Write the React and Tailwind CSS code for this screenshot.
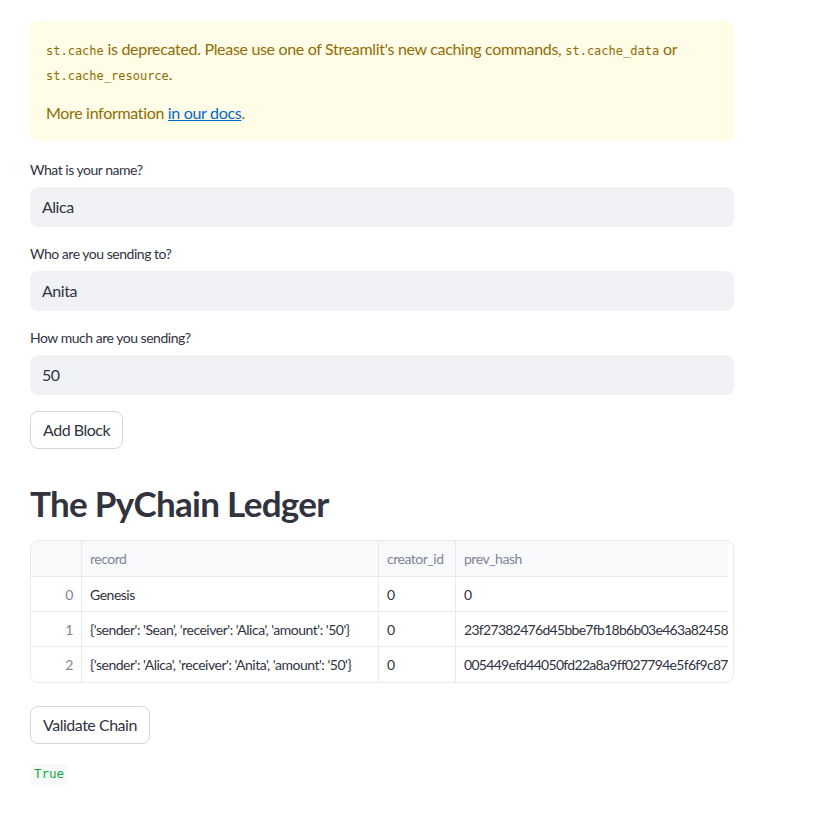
import React from "react";

const sans = { fontFamily: "Lato, 'Noto Sans', sans-serif" };

function Code({ children }) {
  return (
    <code className="text-[12px] leading-[0] tracking-normal font-['DejaVu_Sans_Mono',monospace] text-[#926c05]">{children}</code>
  );
}

function Field({ label, value }) {
  return (
    <div className="flex flex-col">
      <div className="text-[14px] leading-[20px] text-[#31333f] mb-[7px]">{label}</div>
      <div className="h-[40px] rounded-[8px] bg-[#f0f2f6] flex items-center px-[12px] text-[16px] text-[#31333f]">{value}</div>
    </div>
  );
}

function Button({ children }) {
  return (
    <button className="h-[38px] px-[12px] rounded-[8px] border border-[#d5d6da] bg-white text-[16px] text-[#31333f] self-start">
      {children}
    </button>
  );
}

const rows = [
  ["0", "Genesis", "0", "0"],
  ["1", "{'sender': 'Sean', 'receiver': 'Alica', 'amount': '50'}", "0", "23f27382476d45bbe7fb18b6b03e463a824580"],
  ["2", "{'sender': 'Alica', 'receiver': 'Anita', 'amount': '50'}", "0", "005449efd44050fd22a8a9ff027794e5f6f9c87d"],
];

export default function App() {
  return (
    <div className="w-[813px] h-[820px] bg-white tracking-[-0.03em]" style={sans}>
      <div className="w-[704px] ml-[30px] pt-[21px] flex flex-col">
        <div className="bg-[#fffce7] rounded-[8px] px-[16px] pt-[15px] pb-[16px] text-[#926c05] text-[16px] leading-[25px] tracking-[-0.02em]">
          <p>
            <Code>st.cache</Code> is deprecated. Please use one of Streamlit's new caching commands, <Code>st.cache_data</Code> or <Code>st.cache_resource</Code>.
          </p>
          <p className="mt-[14px]">
            More information <a className="text-[#0068c9] underline">in our docs</a>.
          </p>
        </div>
        <div className="mt-[19px] flex flex-col gap-[17px]">
          <Field label="What is your name?" value="Alica" />
          <Field label="Who are you sending to?" value="Anita" />
          <Field label="How much are you sending?" value="50" />
        </div>
        <div className="mt-[16px] flex">
          <Button>Add Block</Button>
        </div>
        <h1 className="mt-[32px] text-[35px] leading-[44px] font-bold text-[#31333f] tracking-[-0.02em]">The PyChain Ledger</h1>
        <div className="mt-[15px] border border-[#e6e9ef] rounded-[8px] overflow-hidden pr-[6px]">
          <div className="w-[697px] overflow-hidden text-[14px] tracking-[-0.035em]">
            <div className="flex h-[36px] bg-[#f8f9fb] border-b border-[#e6e9ef] text-[#808495]">
              <div className="w-[51px] border-r border-[#e6e9ef]" />
              <div className="w-[297px] border-r border-[#e6e9ef] px-[8px] flex items-center">record</div>
              <div className="w-[77px] border-r border-[#e6e9ef] px-[8px] flex items-center">creator_id</div>
              <div className="flex-1 px-[8px] flex items-center">prev_hash</div>
            </div>
            {rows.map((r, i) => (
              <div key={i} className={`flex h-[35px] text-[#31333f] ${i < 2 ? "border-b border-[#e6e9ef]" : ""}`}>
                <div className="w-[51px] border-r border-[#e6e9ef] px-[8px] flex items-center justify-end text-[#808495]">{r[0]}</div>
                <div className="w-[297px] border-r border-[#e6e9ef] px-[8px] flex items-center whitespace-nowrap overflow-hidden">{r[1]}</div>
                <div className="w-[77px] border-r border-[#e6e9ef] px-[8px] flex items-center">{r[2]}</div>
                <div className="flex-1 min-w-0 px-[8px] flex items-center whitespace-nowrap overflow-hidden tracking-[-0.05em]">{r[3]}</div>
              </div>
            ))}
          </div>
        </div>
        <div className="mt-[23px] flex">
          <Button>Validate Chain</Button>
        </div>
        <div className="mt-[20px] flex">
          <code className="bg-[#f8f9fb] rounded-[4px] px-[4px] py-[1px] text-[12.5px] tracking-normal text-[#09ab3b] font-['DejaVu_Sans_Mono',monospace]">True</code>
        </div>
      </div>
    </div>
  );
}
